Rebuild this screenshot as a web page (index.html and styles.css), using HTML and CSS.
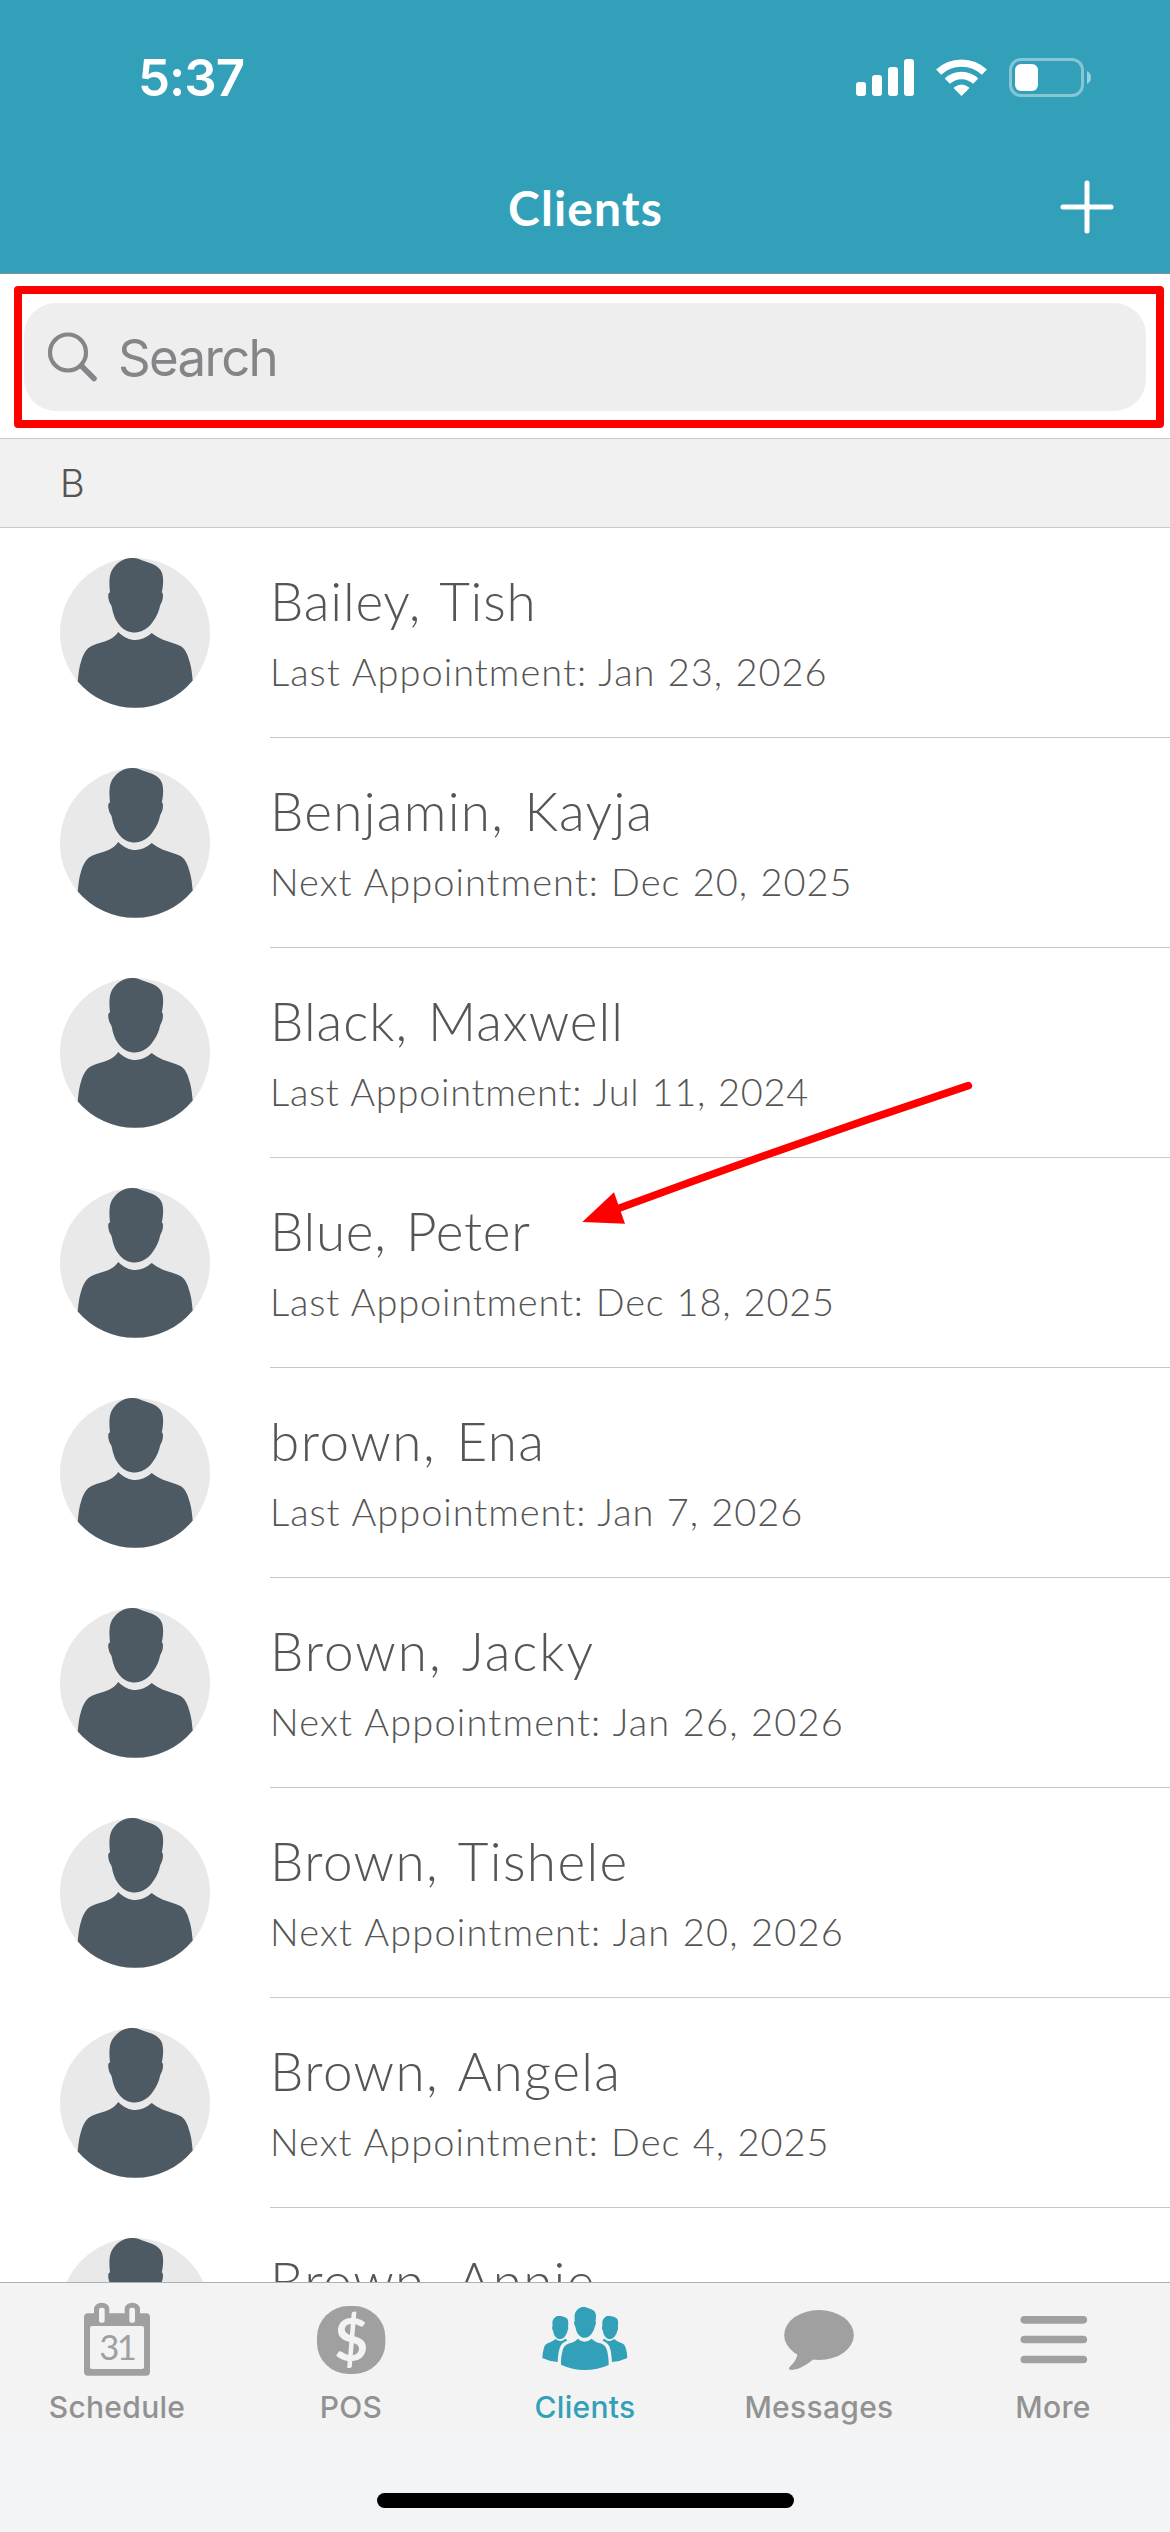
FILE: index.html
```html
<!DOCTYPE html>
<html lang="en">
<head>
<meta charset="utf-8">
<title>Clients</title>
<link rel="stylesheet" href="styles.css">
</head>
<body>
<svg class="defs" width="0" height="0">
  <symbol id="head" viewBox="48 0 56 75" preserveAspectRatio="none">
    <path d="M72 0C62 0 56 6 52 12C49 17 49 26 50 34.5C47.500 34.500 48 40 49.300 43.700C50 46 51.500 47 51.700 48.700C53 56 55 61 57.500 64.500C63 72.500 69 74.500 75 74.500C81 74.500 88 71 93 63.500C97 58 99 53 100 48C100.500 46 102 44.500 102.600 41.300C103.300 37.500 103 34.500 101.800 34.500C103 29 104 21 102 15C99.500 8 92 5.500 84 3C80 1.700 78 0 72 0Z"/>
  </symbol>
  <symbol id="avatar" viewBox="0 0 150 150">
    <circle class="disc" cx="75" cy="75" r="75"/>
    <g class="person">
      <use href="#head" x="48" y="0" width="56" height="75"/>
      <path d="M58.300 74C55 78 53 80 49 81.700C43 84.500 38 85 32 87.700C26 90.500 23.500 96 21.500 102C19 109 18.500 116 17.700 123.500A75 75 0 0 0 132.700 122.500C132 116 131.500 110 130 105C128 98 126.500 92 120.500 88C115 85.200 109 84 103 81.700C98 79.500 95 77.500 91.700 75C81 84.500 69 84.500 58.300 74Z"/>
    </g>
  </symbol>
</svg>

<div class="screen">
  <header class="header">
    <div class="status">
      <span class="time">5:37</span>
      <svg class="status-icons" width="236" height="40" viewBox="856 58 236 40">
        <g fill="#fff">
          <rect x="856" y="82" width="10" height="14" rx="3"/>
          <rect x="872" y="75" width="10" height="21" rx="3"/>
          <rect x="888" y="67" width="10" height="29" rx="3"/>
          <rect x="904" y="59" width="10" height="37" rx="3"/>
          <path d="M954.200 87.200Q961.500 81.800 968.800 87.200Q969.500 88 968.800 88.700L961.500 96L954.200 88.700Q953.500 88 954.200 87.200Z"/>
        </g>
        <g fill="none" stroke="#fff" stroke-width="7.300">
          <path d="M938.600 72.200A33.500 33.500 0 0 1 984.400 72.200"/>
          <path d="M947.300 81.200A20.500 20.500 0 0 1 975.700 81.200"/>
        </g>
        <rect x="1010.500" y="59.500" width="72" height="36" rx="10.500" fill="none" stroke="#fff" stroke-opacity=".4" stroke-width="3"/>
        <path d="M1087 71Q1091 73 1091 77.500T1087 84Z" fill="#fff" fill-opacity=".5"/>
        <rect x="1015" y="64" width="23" height="27" rx="6" fill="#fff"/>
      </svg>
    </div>
    <div class="titlebar">
      <h1 class="title">Clients</h1>
      <svg class="add" width="54" height="54" viewBox="0 0 54 54"><path d="M27 3V51M3 27H51" stroke="#fff" stroke-width="5" stroke-linecap="round"/></svg>
    </div>
  </header>

  <div class="searchbar">
    <div class="field">
      <svg width="52" height="52" viewBox="0 0 52 52" fill="none" stroke="#858589" stroke-linecap="round"><circle cx="22" cy="21.500" r="18" stroke-width="4.200"/><path d="M35.500 35L48 47.500" stroke-width="5.500"/></svg>
      <span class="placeholder">Search</span>
    </div>
    <div class="highlight"></div>
  </div>

  <div class="section">B</div>

  <main class="list">
    <div class="row"><svg class="avatar"><use href="#avatar"/></svg><div class="info"><div class="name">Bailey, Tish</div><div class="sub">Last Appointment: Jan 23, 2026</div></div></div>
    <div class="row"><svg class="avatar"><use href="#avatar"/></svg><div class="info"><div class="name">Benjamin, Kayja</div><div class="sub">Next Appointment: Dec 20, 2025</div></div></div>
    <div class="row"><svg class="avatar"><use href="#avatar"/></svg><div class="info"><div class="name">Black, Maxwell</div><div class="sub">Last Appointment: Jul 11, 2024</div></div></div>
    <div class="row"><svg class="avatar"><use href="#avatar"/></svg><div class="info"><div class="name">Blue, Peter</div><div class="sub">Last Appointment: Dec 18, 2025</div></div></div>
    <div class="row"><svg class="avatar"><use href="#avatar"/></svg><div class="info"><div class="name">brown, Ena</div><div class="sub">Last Appointment: Jan 7, 2026</div></div></div>
    <div class="row"><svg class="avatar"><use href="#avatar"/></svg><div class="info"><div class="name">Brown, Jacky</div><div class="sub">Next Appointment: Jan 26, 2026</div></div></div>
    <div class="row"><svg class="avatar"><use href="#avatar"/></svg><div class="info"><div class="name">Brown, Tishele</div><div class="sub">Next Appointment: Jan 20, 2026</div></div></div>
    <div class="row"><svg class="avatar"><use href="#avatar"/></svg><div class="info"><div class="name">Brown, Angela</div><div class="sub">Next Appointment: Dec 4, 2025</div></div></div>
    <div class="row"><svg class="avatar"><use href="#avatar"/></svg><div class="info"><div class="name">Brown, Annie</div></div></div>
    <svg class="arrow" width="400" height="150" viewBox="580 1080 400 150"><path d="M619 1208.300Q790 1145 968.300 1085.700" fill="none" stroke="#f00" stroke-width="7.600" stroke-linecap="round"/><path d="M582.300 1222L614 1192.300L625 1223.700Z" fill="#f00"/></svg>
  </main>

  <nav class="tabs">
    <div class="tab">
      <svg width="72" height="76" viewBox="243 303 216 228">
        <path d="M264 340H282V328A23 20 0 0 1 328 328V340H374V328A23 20 0 0 1 420 328V340H438Q450 340 450 352V515Q450 527 438 527H264Q252 527 252 515V352Q252 340 264 340Z" fill="#a0a0a0"/>
        <g fill="#f3f3f3"><rect x="297" y="323" width="17" height="45" rx="6"/><rect x="388" y="323" width="17" height="45" rx="6"/><rect x="270" y="378" width="162" height="129" rx="6"/></g>
        <text class="day" x="354" y="481" text-anchor="middle" textLength="113">31</text>
      </svg>
      <span class="label">Schedule</span>
    </div>
    <div class="tab">
      <svg width="72" height="76" viewBox="945 303 216 228">
        <rect x="951" y="318" width="205" height="204" rx="94" fill="#a0a0a0"/>
        <text class="dollar" x="1054" y="482" text-anchor="middle">$</text>
      </svg>
      <span class="label">POS</span>
    </div>
    <div class="tab active">
      <svg width="88" height="76" viewBox="420 303 264 228" fill="#32a0b8">
        <use href="#head" x="519" y="321" width="67" height="93"/>
        <use href="#head" x="453" y="347" width="50" height="71"/>
        <use href="#head" x="602.500" y="347" width="50" height="71"/>
        <path d="M530 416C520 427 514 427 506 430C493 434 488 440 484 455C480 470 480 480 480 494Q515 510 551 510Q590 510 623 495C623 480 622 470 619 455C615 440 610 434 598 430C588 427 580 424 572 416Q551 434 530 416Z"/>
        <path id="side" d="M463 417C455 425 450 426 442 429C433 432 431 437 428 447Q424 460 424 474Q444 484 470 486C472 462 473 448 480 436C486 427 490 427 499 421L493 416L488 420Q477 427 463 417Z"/>
        <use href="#side" transform="translate(1103 0) scale(-1 1)"/>
      </svg>
      <span class="label">Clients</span>
    </div>
    <div class="tab">
      <svg width="72" height="76" viewBox="36 303 216 228" fill="#a0a0a0"><ellipse cx="144" cy="405" rx="104.500" ry="75"/><path d="M80 458Q78 480 58 499C50 507 54 510 62 510C84 508 106 496 128 477Z"/></svg>
      <span class="label">Messages</span>
    </div>
    <div class="tab">
      <svg width="72" height="76" viewBox="743 303 216 228" stroke="#a0a0a0" stroke-width="23" stroke-linecap="round"><path d="M765 359.500H942M765 418.500H942M765 478.500H942"/></svg>
      <span class="label">More</span>
    </div>
  </nav>
  <footer class="home"><div class="indicator"></div></footer>
</div>
</body>
</html>
```
FILE: styles.css
```css
* { box-sizing: border-box; }
body { margin: 0; background: #fff; }
svg { display: block; flex: none; }
.defs { position: absolute; }

.screen {
  position: relative;
  display: flex;
  flex-direction: column;
  width: 1170px;
  height: 2532px;
  overflow: hidden;
  font-family: Inter, "Liberation Sans", sans-serif;
}

.header {
  height: 274px;
  background: #32a0b8;
  border-bottom: 1px solid #7d9399;
  color: #fff;
}
.status {
  display: flex;
  justify-content: space-between;
  align-items: center;
  height: 155px;
  padding: 0 78px 0 138px;
}
.time { padding-top: 1px; font-size: 51px; font-weight: 600; line-height: 60px; letter-spacing: -1px; }
.titlebar {
  display: grid;
  grid-template-columns: 1fr auto 1fr;
  align-items: center;
  height: 104px;
  padding: 0 56px;
}
.title {
  grid-column: 2;
  margin: 0;
  padding: 2px 0 0 1px;
  font: 700 48px/60px Lato, sans-serif;
  letter-spacing: 1.1px;
}
.add { justify-self: end; }

.searchbar { position: relative; height: 164px; padding: 29px 24px 0; }
.field {
  display: flex;
  align-items: center;
  gap: 20px;
  height: 108px;
  padding-left: 22px;
  border-radius: 32px;
  background: #eee;
}
.placeholder { padding-top: 1px; color: #858589; font-size: 51px; line-height: 62px; letter-spacing: -1.7px; }
.highlight {
  position: absolute;
  left: 14px;
  top: 12px;
  width: 1150px;
  height: 142px;
  border: 8px solid #f00;
  border-radius: 4px;
}

.section {
  height: 90px;
  padding-left: 60px;
  border: solid #c8c8c8;
  border-width: 1px 0;
  background: #f1f1f1;
  color: #555;
  font-size: 38px;
  font-weight: 300;
  line-height: 89px;
}

.list { position: relative; height: 1754px; overflow: hidden; }
.row { display: flex; gap: 60px; height: 210px; padding-left: 60px; }
.avatar { width: 150px; height: 150px; margin-top: 30px; }
.disc { fill: #e9e9e9; }
.person { fill: #4e5a63; }
.info {
  display: flex;
  flex: 1;
  flex-direction: column;
  gap: 15px;
  padding-top: 41px;
  border-bottom: 1px solid #c8c8c8;
  color: #555;
  font-family: Lato, sans-serif;
  font-weight: 300;
  white-space: nowrap;
}
.name { font-size: 53px; line-height: 64px; letter-spacing: 1.3px; word-spacing: 4.5px; }
.sub { font-size: 38px; line-height: 46px; letter-spacing: 1px; word-spacing: 1px; }
.row:nth-child(1) .name { letter-spacing: .8px; }
.row:nth-child(3) .name { letter-spacing: 1px; }
.row:nth-child(3) .sub { letter-spacing: .7px; }
.row:nth-child(4) .name { letter-spacing: .7px; }
.row:nth-child(4) .sub { letter-spacing: .8px; }
.row:nth-child(5) .name { letter-spacing: 1.5px; }
.row:nth-child(5) .sub { letter-spacing: .95px; }
.row:nth-child(6) .name { letter-spacing: 2px; }
.row:nth-child(6) .sub, .row:nth-child(7) .sub { letter-spacing: 1.15px; }
.row:nth-child(7) .name, .row:nth-child(8) .name { letter-spacing: 1.4px; }
.arrow { position: absolute; left: 580px; top: 552px; }

.tabs {
  display: grid;
  grid-template-columns: repeat(5, 1fr);
  height: 148px;
  border-top: 1px solid #b0b0b0;
  background: #f3f3f3;
}
.tab {
  display: flex;
  flex-direction: column;
  align-items: center;
  gap: 12px;
  padding-top: 18px;
  color: #929292;
}
.active { color: #32a0b8; }
.label { font-size: 30px; font-weight: 500; line-height: 36px; letter-spacing: .3px; }
.day { fill: #a0a0a0; font: 400 104px Lato, sans-serif; }
.dollar { fill: #f3f3f3; font: 700 176px Lato, sans-serif; }

.home { flex: 1; padding-top: 63px; background: #f3f4f6; }
.indicator { width: 417px; height: 15px; margin: 0 auto; border-radius: 8px; background: #000; }
```
